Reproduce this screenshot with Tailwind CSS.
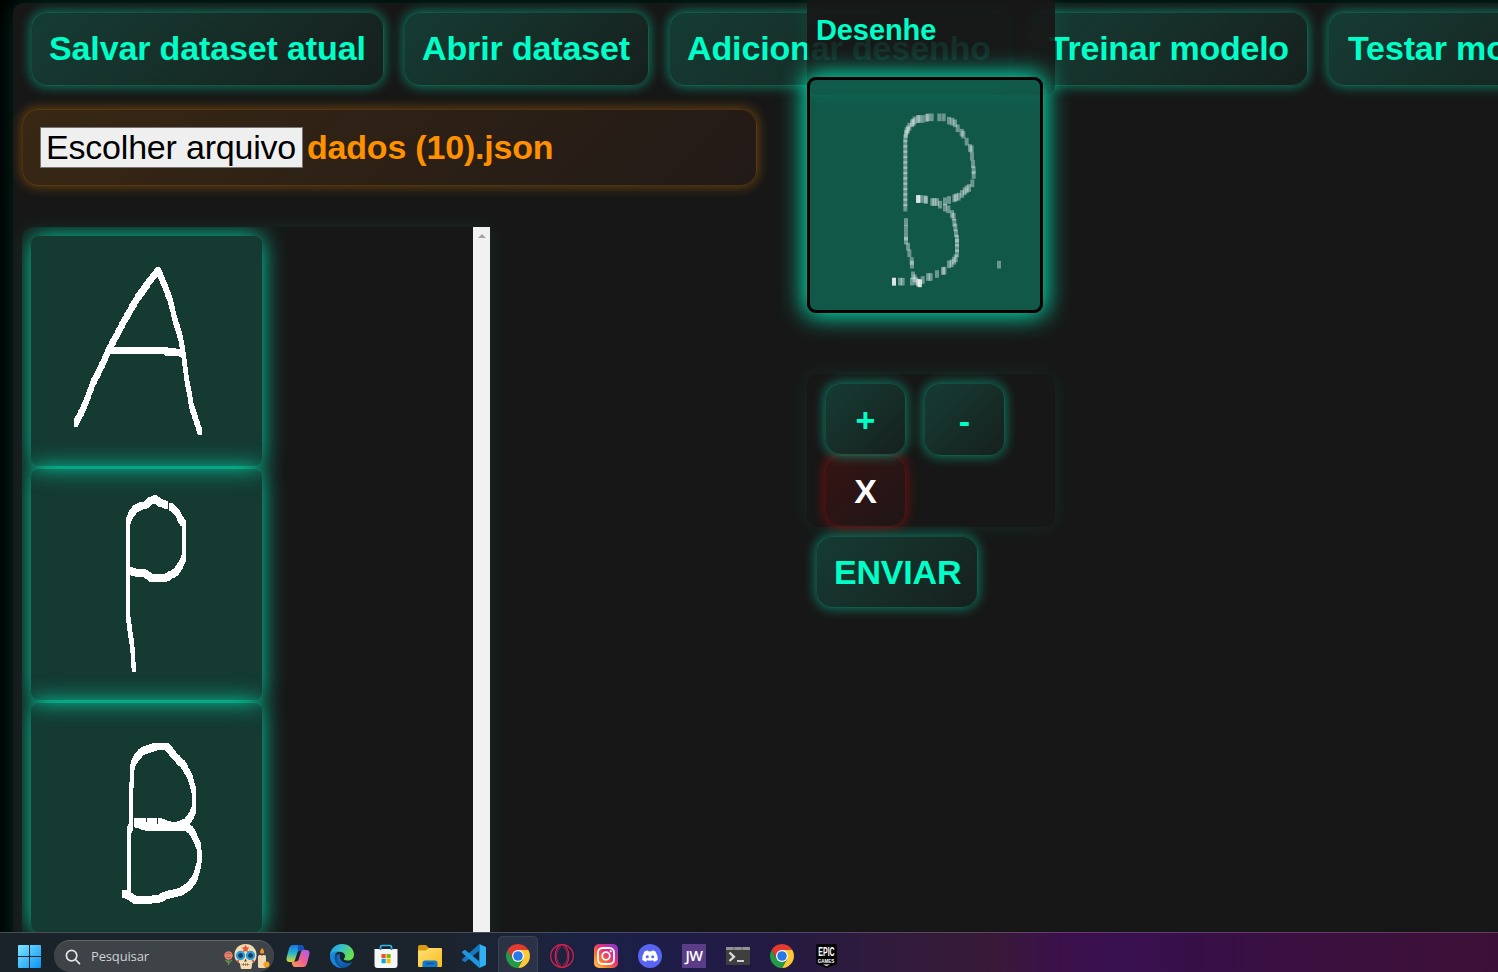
<!DOCTYPE html>
<html lang="pt-BR">
<head>
<meta charset="utf-8">
<title>Desenhe</title>
<script src="https://cdn.jsdelivr.net/npm/@tailwindcss/browser@4"></script>
</head>
<body class="w-[1498px] h-[972px] overflow-hidden bg-black flex flex-col font-['Liberation_Sans',Arial,sans-serif]">
<div class="relative h-[932px] w-full shrink-0 overflow-hidden pl-[13px] pt-[3px]">
  <main class="h-[1000px] w-[1600px] rounded-[10px] bg-[#171717] shadow-[0_0_25px_rgba(0,255,200,0.18)] pl-[9px]">
    <nav class="flex gap-5 pl-[9px] pt-[9px] text-[34px] tracking-[-0.13px] leading-[70px] font-bold text-[#00ffc8] whitespace-nowrap">
      <div class="w-[353px] h-[74px] shrink-0 pl-[17px] rounded-[16px] border border-[#00ffc8]/18 bg-linear-135 from-[#143c33] to-[#16201e] shadow-[0_0_12px_1px_rgba(0,255,200,0.42)]">Salvar dataset atual</div>
      <div class="w-[245px] h-[74px] shrink-0 pl-[17px] rounded-[16px] border border-[#00ffc8]/18 bg-linear-135 from-[#143c33] to-[#16201e] shadow-[0_0_12px_1px_rgba(0,255,200,0.42)]">Abrir dataset</div>
      <div class="w-[341px] h-[74px] shrink-0 pl-[17px] rounded-[16px] border border-[#00ffc8]/18 bg-linear-135 from-[#143c33] to-[#16201e] shadow-[0_0_12px_1px_rgba(0,255,200,0.42)]">Adicionar desenho</div>
      <div class="w-[278px] h-[74px] shrink-0 pl-[18px] tracking-[-0.28px] rounded-[16px] border border-[#00ffc8]/18 bg-linear-135 from-[#143c33] to-[#16201e] shadow-[0_0_12px_1px_rgba(0,255,200,0.42)]">Treinar modelo</div>
      <div class="w-[270px] h-[74px] shrink-0 pl-[19px] rounded-[16px] border border-[#00ffc8]/18 bg-linear-135 from-[#143c33] to-[#16201e] shadow-[0_0_12px_1px_rgba(0,255,200,0.42)]">Testar modelo</div>
    </nav>
    <div class="mt-[23px] w-[735px] h-[77px] flex items-center pl-[17px] rounded-[16px] border border-[#ff9100]/18 bg-linear-135 from-[#382713] to-[#221a17] shadow-[0_0_12px_1px_rgba(255,145,0,0.36)] text-[34px] tracking-[-0.2px]">
      <div class="w-[263px] h-[41px] border border-[#767676] bg-[#efefef] text-black leading-[38px] pl-[5px] whitespace-nowrap">Escolher arquivo</div>
      <div class="ml-[4px] font-bold text-[#ff9100] leading-[38px] pb-px whitespace-nowrap">dados (10).json</div>
    </div>
    <div class="mt-[41px] w-[468px] h-[740px] rounded-tl-[10px] shadow-[0_0_20px_rgba(0,255,200,0.09)] flex overflow-hidden">
      <div class="w-[451px] pl-[9px] pt-[9px] overflow-hidden flex flex-col gap-[3px] rounded-tl-[10px]">
        <svg data-k="A" viewBox="63 48 693 690" preserveAspectRatio="none" class="w-[231px] h-[230px] shrink-0 rounded-[8px] bg-[#00ffc8]/15 shadow-[0_0_25px_rgba(0,255,200,0.85)]"></svg>
        <svg data-k="P" viewBox="63 27 693 693" preserveAspectRatio="none" class="w-[231px] h-[231px] shrink-0 rounded-[8px] bg-[#00ffc8]/15 shadow-[0_0_25px_rgba(0,255,200,0.85)]"></svg>
        <svg data-k="B" viewBox="63 39 693 687" preserveAspectRatio="none" class="w-[231px] h-[229px] shrink-0 rounded-[8px] bg-[#00ffc8]/15 shadow-[0_0_25px_rgba(0,255,200,0.85)]"></svg>
      </div>
      <div class="w-[17px] bg-[#f1f1f1] flex justify-center pt-[7px]">
        <svg class="w-[8px] h-[4px]" viewBox="0 0 8 4"><path d="M0 4L4 0L8 4Z" fill="#a3a3a3"/></svg>
      </div>
    </div>
  </main>

  <aside class="absolute left-[807px] top-0 w-[248px] flex flex-col text-[#00ffc8] font-bold">
    <div class="h-[95px] rounded-b-[10px] bg-[#171717]/90 shadow-[0_0_20px_rgba(0,255,200,0.1)] pl-[9px] pt-[13px] text-[29px] tracking-[-0.1px] leading-[34px]">Desenhe</div>
    <svg data-k="C" viewBox="60 60 690 690" class="-mt-[18px] w-[236px] h-[236px] rounded-[9px] border-[3px] border-black bg-[#00ffc8]/28 shadow-[0_0_25px_3px_rgba(0,255,200,0.92)]"></svg>
    <div class="mt-[61px] h-[153px] rounded-[10px] bg-[#171717] shadow-[0_0_20px_rgba(0,255,200,0.09)] pl-[18px] pt-[9px] text-[34px] text-center">
      <div class="flex gap-[18px] leading-[72px]">
        <div class="w-[81px] h-[72px] rounded-[16px] border border-[#00ffc8]/18 bg-linear-135 from-[#143c33] to-[#16201e] shadow-[0_0_12px_1px_rgba(0,255,200,0.42)]">+</div>
        <div class="w-[81px] h-[73px] pt-px rounded-[16px] border border-[#00ffc8]/18 bg-linear-135 from-[#143c33] to-[#16201e] shadow-[0_0_12px_1px_rgba(0,255,200,0.42)]">-</div>
      </div>
      <div class="-mt-px w-[81px] h-[72px] leading-[70px] rounded-[16px] border border-[#ff0000]/18 bg-linear-135 from-[#ff0000]/13 to-[#ff0000]/4 shadow-[0_0_12px_1px_rgba(255,0,0,0.38)] text-white">X</div>
    </div>
    <div class="ml-[9px] mt-[9px] w-[162px] h-[72px] pl-[17px] rounded-[16px] border border-[#00ffc8]/18 bg-linear-135 from-[#143c33] to-[#16201e] shadow-[0_0_12px_1px_rgba(0,255,200,0.42)] text-[34px] tracking-[-0.2px] leading-[70px]">ENVIAR</div>
  </aside>
</div>

<footer class="relative h-10 w-full shrink-0 flex border-t border-white/20 bg-[linear-gradient(90deg,#1a232a_0px,#1b242c_440px,#1b2340_560px,#1c1d48_650px,#251a42_790px,#301b3c_880px,#381a38_990px,#3b104a_1060px,#39104f_1120px,#370f48_1190px,#3b103f_1320px,#3c1036_1498px)]">
  <svg class="ml-[18px] mt-3 w-[23px] h-[23px] shrink-0" viewBox="0 0 23 23"><defs><linearGradient id="win" x1="0" y1="0" x2="1" y2="1" gradientUnits="objectBoundingBox"><stop stop-color="#7fe6ff"/><stop offset="1" stop-color="#0a93f5"/></linearGradient></defs><path fill="url(#win)" d="M1 0H11V11H0V1Q0 0 1 0ZM12 0H22Q23 0 23 1V11H12ZM0 12H11V23H1Q0 23 0 22ZM12 12H23V22Q23 23 22 23H12Z"/></svg>
  <div class="ml-[13px] mt-[7px] w-[220px] h-8 shrink-0 rounded-full bg-[#3e4348] border-t border-[#62666a] flex items-center pl-[11px]">
    <svg class="w-4 h-4" viewBox="0 0 16 16" fill="none" stroke="#e2e4e5" stroke-width="1.7" stroke-linecap="round"><circle cx="6.6" cy="6.6" r="5.2"/><path d="M10.5 10.5L14.5 14.7"/></svg>
    <span class="ml-[10px] w-[131px] text-[13px] tracking-[-0.15px] text-[#d0d2d4] font-['Open_Sans','Noto_Sans',sans-serif] leading-5 -mt-px">Pesquisar</span>
    <svg class="w-[52px] h-[28px] shrink-0" viewBox="221 942 52 28">
      <path d="M227.500 955V964M224.500 959L227.500 962L231 959" stroke="#5c8d4b" stroke-width="1.500" fill="none"/><circle cx="227.500" cy="954.500" r="4.200" fill="#e88374"/><path d="M225 953q2.500-2 5 0M225.500 956q2 1.500 4 0" stroke="#bd5148" fill="none"/>
      <path d="M244.500 943c-7 0-11 5-11 11 0 5 3 7 5 8 1 1 1 6 2 6h9c2 0 1-5 2-6 2-1 4-3 4-8 0-6-4-11-11-11Z" fill="#f4ddb2"/>
      <g fill="none" stroke="#22a0df" stroke-width="2.300"><circle cx="239.500" cy="954.500" r="3.500"/><circle cx="249.500" cy="954.500" r="3.500"/></g>
      <circle cx="239.500" cy="954.500" r="2.500" fill="#183c68"/><circle cx="249.500" cy="954.500" r="2.500" fill="#183c68"/>
      <path d="M244.500 943.500l1.300 2.700 2.700.3-2 2 .6 2.800-2.600-1.400-2.600 1.400.6-2.800-2-2 2.700-.3Z" fill="#e65a3f"/><path d="M244.500 957.500l-1.300 3h2.600Z" fill="#4d3a34"/><path d="M240.500 963.500h8M242.500 962v3M244.500 962v3M246.500 962v3" stroke="#8b6550" stroke-width=".7"/>
      <circle cx="237" cy="960" r="1.200" fill="#e65a3f"/><circle cx="252" cy="960" r="1.200" fill="#e65a3f"/>
      <rect x="257" y="954" width="8" height="13" rx="1.500" fill="#f2d8b2"/><path d="M261 947c3 3 2.500 6 0 6s-2.500-3 0-6Z" fill="#ff941e"/><path d="M261 952v3" stroke="#533" stroke-width=".8"/><circle cx="265.500" cy="963.500" r="3" fill="#f4a21c"/>
    </svg>
  </div>

  <div class="ml-3 mt-[11px] flex gap-5 h-6">
    <!-- Copilot -->
    <svg class="w-6 h-6" viewBox="0 0 24 24"><defs><linearGradient id="c1" x1="0" y1="0" x2="0" y2="1"><stop stop-color="#1a75e8"/><stop offset=".5" stop-color="#29b8c9"/><stop offset="1" stop-color="#dfd72a"/></linearGradient><linearGradient id="c2" x1="1" y1="0" x2="0" y2="1"><stop stop-color="#a65cf0"/><stop offset=".5" stop-color="#f0618f"/><stop offset="1" stop-color="#ff9c53"/></linearGradient></defs><path d="M7 1H15q2 0 2.600 2l1 3.500H14q-2 0-2.600 2L9 16q-.6 2-2.500 2H3.500Q0 18 .5 14L3 4.500Q4 1 7 1Z" fill="url(#c1)"/><path d="M12 1h3q2 0 2.600 2l1 3.500H14q-1.500 0-2.200 1Z" fill="#1650bd"/><path d="M17 23H9q-2 0-2.600-2L5.500 17.500H10q2 0 2.600-2L15 8q.6-2 2.500-2h3Q24 6 23.500 10L21 19.500Q20 23 17 23Z" fill="url(#c2)"/></svg>
    <!-- Edge -->
    <svg class="w-6 h-6" viewBox="0 0 24 24"><defs><linearGradient id="e1" x1="0" y1="0" x2="1" y2=".4"><stop stop-color="#1e9be6"/><stop offset=".5" stop-color="#35c1c9"/><stop offset="1" stop-color="#66e04c"/></linearGradient><linearGradient id="e2" x1="0" y1="0" x2="1" y2="1"><stop stop-color="#1384d8"/><stop offset="1" stop-color="#0c4a9b"/></linearGradient></defs><path d="M0 12C0 5 5 0 12 0s12 5 12 10.500c0 4-3 6-6.500 6-3 0-4-1-3.500-2 1-1 1.300-2 1-3.500C14 8 10 7 7 8 3 9 0 11 0 14Z" fill="url(#e1)"/><path d="M0 12C1 8 5 7 8 7.500c-3 2-4 5-3 8.500 1 4 4 7 8 8C6 24.500 0 19.500 0 12Z" fill="#1687df"/><path d="M8.500 10.500C6.500 13 6.500 18 10 21c3.500 3 8 2 12.500-3-3 1.500-7 1.500-10-.5-3-2-3.500-4.500-2.500-7Z" fill="url(#e2)"/><path d="M5 12c-1 5 2 11 8 12 4-.2 7-2.200 9.500-6-5 4-10 3-12.500 0-2-2.500-2-5-1-8-2 0-3.500 1-4 2Z" fill="#0f5fae" opacity=".8"/></svg>
    <!-- Store -->
    <svg class="w-6 h-6" viewBox="0 0 24 24"><path d="M6.500 7V3q0-1.500 1.500-1.500h8q1.500 0 1.500 1.500v4" fill="none" stroke="#35b4ee" stroke-width="1.700"/><path d="M.5 5H23.500V21Q23.500 24 20.500 24H3.500Q.5 24 .5 21Z" fill="#f5f6f7"/><path d="M7.500 10h4.200v4.200H7.500Z" fill="#f25022"/><path d="M12.500 10h4.200v4.200h-4.200Z" fill="#7fba00"/><path d="M7.500 15h4.200v4.200H7.500Z" fill="#00a4ef"/><path d="M12.500 15h4.200v4.200h-4.200Z" fill="#ffb900"/><path d="M6.500 6V4M17.500 6V4" stroke="#1681c5" stroke-width="1.700"/></svg>
    <!-- Explorer -->
    <svg class="w-6 h-6" viewBox="0 0 24 24"><defs><linearGradient id="f1" x1="0" y1="0" x2="1" y2="1"><stop stop-color="#ffe17c"/><stop offset="1" stop-color="#f9bc18"/></linearGradient></defs><path d="M0 3q0-2 2-2h6l3 3v4H0Z" fill="#d99a14"/><path d="M0 6.500H8L11 4H23q1 0 1 1V22q0 1-1 1H1q-1 0-1-1Z" fill="url(#f1)"/><path d="M4.500 23V19q0-2.500 2.500-2.500H17q2.500 0 2.500 2.500v4Z" fill="#1478cc"/><path d="M8 19.500h8" stroke="#0d4f8e" stroke-width="1.200"/></svg>
    <!-- VS Code -->
    <svg class="w-6 h-6" viewBox="0 0 24 24"><path d="M17.300 0 24 3V21l-6.700 3Z" fill="#2fb0f3"/><path d="M17.300 0V6.700L3 18.300.2 16.600Q-.3 15.800.4 15.100Z" fill="#1478c0"/><path d="M17.300 24V17.300L3 5.700.2 7.400Q-.3 8.200.4 8.900Z" fill="#1f95dd"/></svg>
    <!-- Chrome, active window -->
    <div class="-mx-2 -mt-2 w-10 h-9 px-[7px] pt-[7px] rounded-t-[5px] border border-b-0 border-white/8 bg-white/7">
      <svg class="w-6 h-6" viewBox="0 0 24 24"><path d="M12 12V6H22.390A12 12 0 0 1 12 24L17.200 15Z" fill="#fcc934"/><path d="M12 12L17.200 15L12 24A12 12 0 0 1 1.610 6L6.800 15Z" fill="#249a48"/><path d="M12 6H22.390A12 12 0 0 0 1.610 6L6.800 15L12 12Z" fill="#e33b2e"/><circle cx="12" cy="12" r="6" fill="#fff"/><circle cx="12" cy="12" r="4.800" fill="#2878ea"/></svg>
    </div>
    <!-- Opera GX -->
    <svg class="w-6 h-6" viewBox="0 0 24 24" fill="none" stroke="#d8204f" stroke-width="1.200"><circle cx="12" cy="12" r="11.300"/><ellipse cx="12" cy="12" rx="6.800" ry="11.300"/><path d="M11 2.800c-6 3-6 15.400 0 18.400M13 2.800c6 3 6 15.400 0 18.400" stroke-width=".8"/></svg>
    <!-- Instagram -->
    <svg class="w-6 h-6" viewBox="0 0 24 24"><defs><linearGradient id="ig" x1="0" y1="1" x2="1" y2="0"><stop stop-color="#ffd05a"/><stop offset=".3" stop-color="#fb7a2c"/><stop offset=".6" stop-color="#e12f7b"/><stop offset="1" stop-color="#7a3de0"/></linearGradient></defs><rect width="24" height="24" rx="5" fill="url(#ig)"/><g fill="none" stroke="#fff" stroke-width="1.800"><rect x="4" y="4" width="16" height="16" rx="4.500"/><circle cx="12" cy="12" r="3.800"/></g><circle cx="16.700" cy="7.300" r="1.100" fill="#fff"/></svg>
    <!-- Discord -->
    <svg class="w-6 h-6" viewBox="0 0 24 24"><circle cx="12" cy="12" r="12" fill="#5865f2"/><path d="M6.500 7.500Q8 6.600 10 6.500l.5 1q1.500-.3 3 0l.5-1q2 .1 3.500 1 2.500 4 2.200 8.500-1.700 1.300-3.700 1.700l-.9-1.500q-3.100.9-6.200 0L8 17.700Q6 17.300 4.300 16 4 11.500 6.500 7.500Z" fill="#fff"/><circle cx="9.300" cy="12.700" r="1.500" fill="#5865f2"/><circle cx="14.700" cy="12.700" r="1.500" fill="#5865f2"/></svg>
    <div class="w-6 h-6 bg-[#5b3c88] text-white text-[14.500px] leading-[23px] text-center tracking-[-0.5px] font-semibold font-['Open_Sans',sans-serif]">JW</div>
    <!-- Terminal -->
    <svg class="w-6 h-6" viewBox="0 0 24 24"><rect y="3" width="24" height="18" rx="1" fill="#3f3f3f"/><path d="M1 3H23q1 0 1 1V6H0V4q0-1 1-1Z" fill="#929292"/><path d="M8 3v3M16 3v3" stroke="#666"/><path d="M3.500 8.500L8 12.800L3.500 17" fill="none" stroke="#ddd" stroke-width="2.300"/><path d="M11 17h7" stroke="#fff" stroke-width="1.500"/></svg>
    <!-- Chrome -->
    <svg class="w-6 h-6" viewBox="0 0 24 24"><path d="M12 12V6H22.390A12 12 0 0 1 12 24L17.200 15Z" fill="#fcc934"/><path d="M12 12L17.200 15L12 24A12 12 0 0 1 1.610 6L6.800 15Z" fill="#249a48"/><path d="M12 6H22.390A12 12 0 0 0 1.610 6L6.800 15L12 12Z" fill="#e33b2e"/><circle cx="12" cy="12" r="6" fill="#fff"/><circle cx="12" cy="12" r="4.800" fill="#2878ea"/></svg>
    <!-- Epic Games -->
    <div class="w-6 h-6 flex justify-center"><div class="relative w-[21px] h-6 text-white text-center font-bold"><svg class="absolute inset-0 w-[21px] h-6" viewBox="0 0 21 24"><path d="M1.500 0H19.500Q21 0 21 1.500V20L10.500 24L0 20V1.500Q0 0 1.500 0Z" fill="#070707"/><path d="M7 20.500H14L10.500 22Z" fill="#fff"/></svg><div class="relative text-[12px] leading-[12px] pt-[2px] scale-x-[0.58] -mx-2">EPIC</div><div class="relative text-[4.500px] leading-[5px] mt-px -mx-1">GAMES</div></div></div>
  </div>
</footer>
<script>
// Handwritten letters: each stroke is a trail of 12x23 brush stamps.
const strokes = {
  A: [[[444,151],[415,188],[380,238],[345,298],[318,349],[298,386],[265,459],[250,486],[225,554],[197,610]],
      [[444,151],[462,190],[480,239],[495,299],[510,349],[520,399],[530,479],[545,559],[569,633]],
      [[300,391],[465,391],[472,396],[513,398]]],
  P: [[[353,195],[353,463],[358,500],[367,560],[371,625]],
      [[353,190],[360,168],[375,147],[393,138]],
      [[406,136],[418,125],[435,117],[450,128],[468,135]],
      [[484,140],[503,160],[512,180],[522,190],[522,290],[512,315],[500,333],[475,350],[465,353],[422,353],[405,340],[380,338],[358,333]]],
  B: [[[342,611],[358,617],[375,629],[420,629],[450,625],[470,615],[510,606],[535,590],[555,565],[565,530],[570,500],[565,465],[552,435],[540,418],[530,411],[470,412],[415,412],[378,400]],
      [[378,395],[401,395]],[[416,395],[436,395]],
      [[449,396],[480,407],[500,408],[530,397],[545,375],[551,360],[551,300],[540,260],[520,225],[500,205],[480,180],[468,169],[440,169],[400,182],[380,200],[368,225],[365,260],[362,410],[357,420],[357,600]]]
};
const dots = [[348,486],[348,507],[348,530],[348,542],[354,560],[358,580],[365,603],[366,614],[369,646],[374,655],[378,663],[384,668],[386,668],[389,670],[390,670],[390,670],
[312,665],[312,665],[312,665],[312,665],[330,665],[338,665],[366,665],[398,660],[414,651],[422,651],[441,642],[459,633],[463,632],[477,613],[485,610],[492,602],[497,595],[501,580],[501,564],[501,548],[501,536],[498,520],[496,502],[493,488],[491,470],[486,462],[475,448],[465,443],[450,434],[441,426],[433,426],[427,426],[408,420],[406,418],[394,417],[384,417],[384,417],[384,417],[386,417],
[465,424],[477,420],[493,415],[498,412],[506,410],[516,402],[524,394],[530,388],[537,384],[547,370],[551,345],[551,330],[549,312],[546,290],[545,268],[540,264],[530,245],[520,224],[515,218],[503,205],[495,190],[487,185],[477,182],[461,172],[448,172],[425,172],[414,172],[410,174],[398,177],[388,177],[384,177],[374,181],[370,187],[366,190],[358,200],[354,208],[350,213],[348,222],[627,614]];
for (let y = 235; y <= 452; y += 16) dots.push([346, y]);
const stamp = (svg, x, y, o) => {
  const r = document.createElementNS('http://www.w3.org/2000/svg', 'rect');
  r.setAttribute('x', x - 6); r.setAttribute('y', y - 11.5);
  r.setAttribute('width', 12); r.setAttribute('height', 23);
  r.setAttribute('fill', '#fff'); r.setAttribute('fill-opacity', o);
  if (o === 1) r.setAttribute('shape-rendering', 'crispEdges');
  svg.appendChild(r);
};
for (const svg of document.querySelectorAll('svg[data-k]')) {
  const k = svg.dataset.k;
  if (k === 'C') { dots.forEach(([x, y]) => stamp(svg, x, y, 0.38)); continue; }
  for (const line of strokes[k]) for (let i = 1; i < line.length; i++) {
    const [a, b] = line[i - 1], [c, d] = line[i];
    const n = Math.max(1, Math.ceil(Math.hypot(c - a, d - b) / 4));
    for (let j = 0; j <= n; j++) stamp(svg, a + (c - a) * j / n, b + (d - b) * j / n, 1);
  }
}
</script>
</body>
</html>
